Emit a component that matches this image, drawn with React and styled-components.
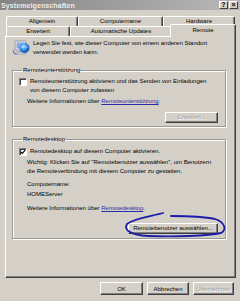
import React from "react";
import styled, { createGlobalStyle } from "styled-components";

const GlobalStyle = createGlobalStyle`
  html, body {
    margin: 0;
    padding: 0;
    background: #d4d0c8;
  }
  body {
    font-family: "Liberation Sans", Arial, sans-serif;
    font-size: 6px;
    line-height: 9px;
    color: #000;
  }
`;

const Window = styled.div`
  width: 240px;
  height: 301px;
  overflow: hidden;
  background: #d4d0c8;
  display: flex;
  flex-direction: column;
`;

const TitleBar = styled.div`
  height: 10px;
  display: flex;
  align-items: center;
  justify-content: space-between;
  padding: 0 2px 0 1px;
  background: linear-gradient(to right, #848484, #b8b8b8);
`;

const Title = styled.span`
  font-weight: bold;
  font-size: 7px;
  color: #ecebe6;
  letter-spacing: 0.1px;
`;

const TitleButtons = styled.div`
  display: flex;
  gap: 1px;
`;

const TitleButton = styled.div`
  width: 9px;
  height: 8px;
  box-sizing: border-box;
  background: #d4d0c8;
  border-top: 1px solid #fff;
  border-left: 1px solid #fff;
  border-right: 1px solid #404040;
  border-bottom: 1px solid #404040;
  font-size: 7px;
  line-height: 6px;
  font-weight: bold;
  text-align: center;
  color: #000;
`;

const Tabs = styled.div`
  padding: 6px 0 0 6px;
  display: flex;
  flex-direction: column;
`;

const TabRow = styled.div`
  display: flex;
  height: 10px;
`;

const Tab = styled.div`
  width: ${(p) => p.$w}px;
  box-sizing: border-box;
  border-top: 1px solid #fff;
  border-left: 1px solid #fff;
  border-right: 1px solid #404040;
  box-shadow: inset -1px 0 0 #808080;
  border-radius: 2px 2px 0 0;
  text-align: center;
  line-height: 9px;
  white-space: nowrap;
  background: #d4d0c8;
`;

const ActiveTab = styled(Tab)`
  position: relative;
  z-index: 2;
  height: 13px;
  margin: -2px -1px -1px -2px;
  width: ${(p) => p.$w + 3}px;
  padding-top: 1px;
`;

const Panel = styled.div`
  margin: 0 4px 0 5px;
  height: 242px;
  box-sizing: border-box;
  border-top: 1px solid #fff;
  border-left: 1px solid #fff;
  border-right: 1px solid #404040;
  border-bottom: 1px solid #404040;
  box-shadow: inset -1px -1px 0 #808080;
  padding: 2px 9px 0 6px;
  display: flex;
  flex-direction: column;
`;

const Intro = styled.div`
  display: flex;
  gap: 2px;
  padding-left: 1px;
  align-items: flex-start;
`;

const IntroText = styled.p`
  margin: 0;
  white-space: nowrap;
`;

const Group = styled.fieldset`
  margin: ${(p) => p.$top}px 0 0 0;
  padding: 0 7px ${(p) => p.$bottom}px 6px;
  border: 1px solid #9a9890;
  box-shadow: 1px 1px 0 #fff, inset 1px 1px 0 #fff;
  display: flex;
  flex-direction: column;
  min-width: 0;
`;

const Legend = styled.legend`
  padding: 0 1px;
  margin-left: 3px;
  line-height: 9px;
`;

const CheckRow = styled.label`
  display: flex;
  gap: 3px;
  margin-top: ${(p) => p.$top}px;
  align-items: flex-start;
  white-space: nowrap;
`;

const Box = styled.span`
  flex: none;
  width: 8px;
  height: 8px;
  box-sizing: border-box;
  margin-top: 0.5px;
  background: #fff;
  border-top: 1px solid #808080;
  border-left: 1px solid #808080;
  border-right: 1px solid #fff;
  border-bottom: 1px solid #fff;
  box-shadow: inset 1px 1px 0 #404040;
  display: flex;
  align-items: center;
  justify-content: center;
`;

const Indented = styled.p`
  margin: ${(p) => p.$top}px 0 0 8px;
  white-space: nowrap;
`;

const Link = styled.a`
  color: #2b2ba6;
  text-decoration: underline;
`;

const Button = styled.button`
  width: ${(p) => p.$w}px;
  height: ${(p) => p.$h || 11}px;
  padding: 0;
  box-sizing: border-box;
  font-family: "Liberation Sans", Arial, sans-serif;
  font-size: 6px;
  white-space: nowrap;
  background: #d4d0c8;
  color: ${(p) => (p.disabled ? "#a4a09a" : "#000")};
  text-shadow: ${(p) => (p.disabled ? "1px 1px 0 #fff" : "none")};
  border-top: 1px solid #fff;
  border-left: 1px solid #fff;
  border-right: 1px solid #404040;
  border-bottom: 1px solid #404040;
  box-shadow: inset -1px -1px 0 #808080;
  border-radius: 0;
`;

const ButtonRow = styled.div`
  display: flex;
  justify-content: flex-end;
  margin-top: ${(p) => p.$top}px;
`;

const Marked = styled.div`
  position: relative;
`;

const Scribble = styled.svg`
  position: absolute;
  left: -5px;
  top: -11px;
  overflow: visible;
  pointer-events: none;
`;

const Footer = styled.div`
  display: flex;
  justify-content: flex-end;
  gap: 4px;
  padding: 4px 6px 0 0;
`;

const ComputerIcon = () => (
  <svg width="18" height="17" viewBox="0 0 18 17">
    <defs>
      <radialGradient id="ball" cx="0.4" cy="0.35" r="0.7">
        <stop offset="0" stopColor="#bfe4ff" />
        <stop offset="0.5" stopColor="#2f8fe6" />
        <stop offset="1" stopColor="#1040a0" />
      </radialGradient>
    </defs>
    <path d="M1 11 C-1 14 3 16 6 14" fill="none" stroke="#6d7fa8" strokeWidth="1.2" />
    <rect x="2" y="2" width="11" height="9" rx="1" fill="#e8e8ec" stroke="#8088a0" strokeWidth="0.8" />
    <rect x="3.5" y="3.5" width="8" height="6" fill="#8aa8d8" />
    <rect x="5" y="11" width="6" height="2" fill="#b8bcc8" />
    <rect x="3" y="13" width="10" height="2" rx="1" fill="#dcdce4" stroke="#8088a0" strokeWidth="0.6" />
    <circle cx="11.5" cy="9" r="5" fill="url(#ball)" />
    <path d="M8 8.5 Q11.5 6.5 15 8.5" fill="none" stroke="#dff2ff" strokeWidth="0.6" opacity="0.7" />
  </svg>
);

const Check = () => (
  <svg width="6" height="6" viewBox="0 0 6 6">
    <path d="M0.8 2.8 L2.3 4.3 L5.2 1.2" fill="none" stroke="#000" strokeWidth="1.2" />
  </svg>
);

export default function App() {
  return (
    <>
      <GlobalStyle />
      <Window>
        <TitleBar>
          <Title>Systemeigenschaften</Title>
          <TitleButtons>
            <TitleButton>?</TitleButton>
            <TitleButton>×</TitleButton>
          </TitleButtons>
        </TitleBar>

        <Tabs>
          <TabRow>
            <Tab $w={72}>Allgemein</Tab>
            <Tab $w={85}>Computername</Tab>
            <Tab $w={72}>Hardware</Tab>
          </TabRow>
          <TabRow>
            <Tab $w={64}>Erweitert</Tab>
            <Tab $w={102}>Automatische Updates</Tab>
            <ActiveTab $w={63}>Remote</ActiveTab>
          </TabRow>
        </Tabs>

        <Panel>
          <Intro>
            <ComputerIcon />
            <IntroText>
              Legen Sie fest, wie dieser Computer von einem anderen Standort
              <br />
              verwendet werden kann.
            </IntroText>
          </Intro>

          <Group $top={9} $bottom={3}>
            <Legend>Remoteunterstützung</Legend>
            <CheckRow $top={2}>
              <Box />
              <span>
                Remoteunterstützung aktivieren und das Senden von Einladungen
                <br />
                von diesem Computer zulassen
              </span>
            </CheckRow>
            <Indented $top={2}>
              Weitere Informationen über <Link>Remoteunterstützung</Link>.
            </Indented>
            <ButtonRow $top={5.5}>
              <Button $w={53} disabled>
                Erweitert...
              </Button>
            </ButtonRow>
          </Group>

          <Group $top={8.5} $bottom={4}>
            <Legend>Remotedesktop</Legend>
            <CheckRow $top={3}>
              <Box>
                <Check />
              </Box>
              <span>Remotedesktop auf diesem Computer aktivieren.</span>
            </CheckRow>
            <Indented $top={2}>
              Wichtig: Klicken Sie auf "Remotebenutzer auswählen", um Benutzern
              <br />
              die Remoteverbindung mit diesem Computer zu gestatten.
            </Indented>
            <Indented $top={4}>Computername:</Indented>
            <Indented $top={1}>HOMEServer</Indented>
            <Indented $top={5}>
              Weitere Informationen über <Link>Remotedesktop</Link>.
            </Indented>
            <ButtonRow $top={9.5}>
              <Marked>
                <Button $w={90}>Remotebenutzer auswählen...</Button>
                <Scribble width="104" height="28" viewBox="0 0 104 28">
                  <path
                    d="M40 1 C30 4 12 6 4 12 C0 18 8 23 25 24 C50 25 85 24 98 21 C104 18 102 10 92 7 C78 4 60 4 48 4"
                    fill="none"
                    stroke="#1c1ca8"
                    strokeWidth="1.8"
                    strokeLinecap="round"
                  />
                </Scribble>
              </Marked>
            </ButtonRow>
          </Group>
        </Panel>

        <Footer>
          <Button $w={43} $h={13}>OK</Button>
          <Button $w={42} $h={13}>Abbrechen</Button>
          <Button $w={41} $h={13} disabled>
            Übernehmen
          </Button>
        </Footer>
      </Window>
    </>
  );
}
